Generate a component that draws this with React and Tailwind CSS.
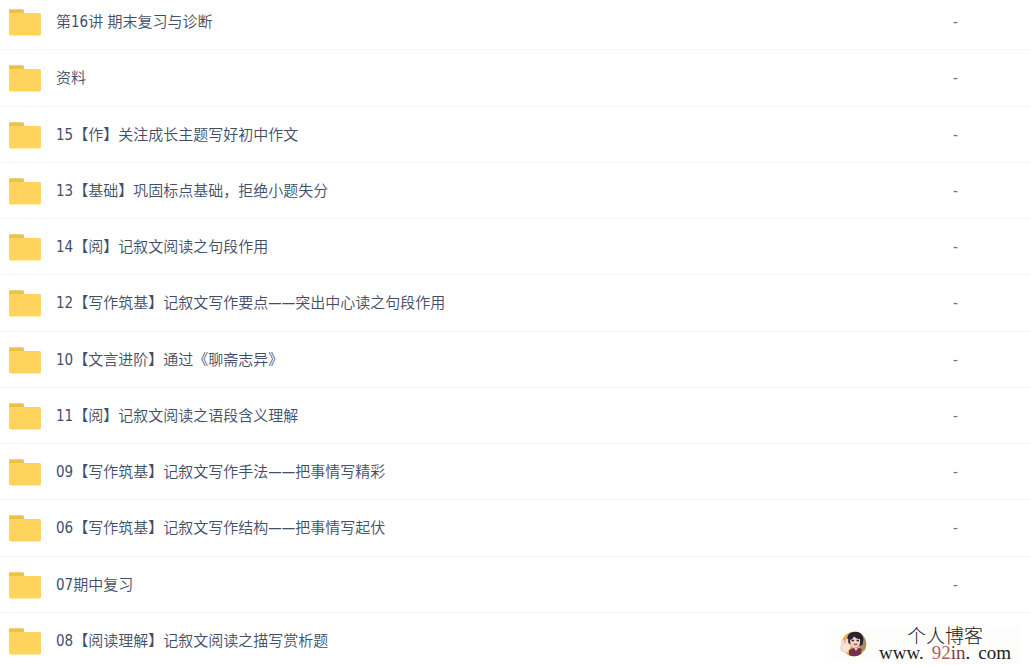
const rows = [
  { name: '第16讲 期末复习与诊断', size: '-' },
  { name: '资料', size: '-' },
  { name: '15【作】关注成长主题写好初中作文', size: '-' },
  { name: '13【基础】巩固标点基础，拒绝小题失分', size: '-' },
  { name: '14【阅】记叙文阅读之句段作用', size: '-' },
  { name: '12【写作筑基】记叙文写作要点——突出中心读之句段作用', size: '-' },
  { name: '10【文言进阶】通过《聊斋志异》', size: '-' },
  { name: '11【阅】记叙文阅读之语段含义理解', size: '-' },
  { name: '09【写作筑基】记叙文写作手法——把事情写精彩', size: '-' },
  { name: '06【写作筑基】记叙文写作结构——把事情写起伏', size: '-' },
  { name: '07期中复习', size: '-' },
  { name: '08【阅读理解】记叙文阅读之描写赏析题', size: '' },
];

function FolderIcon() {
  return (
    <svg className="block h-7 w-8 shrink-0" viewBox="0 0 32 28" aria-hidden="true">
      <path d="M0 2.6Q0 1.2 1.4 1.2H13.2Q14.6 1.2 14.9 2.6L15.5 6H0Z" fill="#ebc14c" />
      <path d="M0 5H30.6Q32 5 32 6.4V25.8Q32 27.6 30.2 27.6H1.8Q0 27.6 0 25.8Z" fill="#ffd45c" />
    </svg>
  );
}

function Avatar() {
  return (
    <svg className="h-7 w-7 shrink-0" viewBox="0 0 28 28" aria-hidden="true">
      <circle cx="15" cy="14" r="12.3" fill="#e3b04c" />
      <path d="M17 1.9A12.3 12.3 0 0 1 25 21L21 19 20 8Z" fill="#a9905f" />
      <path d="M8.5 12Q7 3 14 2Q23 0 24.5 9L23.5 15 20 16 11 14Z" fill="#2b2430" />
      <path d="M11 10Q14 9 15 6.5Q18 9.5 21 9Q22 17 16.5 18Q11 17 11 10Z" fill="#f3d3c4" />
      <path d="M12.6 10.5h2.4M17.6 10.5h2.4" stroke="#2b2430" strokeWidth="1.6" />
      <path d="M14.2 13.8h4.6q-2 3-4.6 0Z" fill="#a8404c" />
      <path d="M10 20Q16 16 23 19L22 24Q16 28 10 25Z" fill="#74304f" />
      <path d="M15 18l2 3 2-3Z" fill="#f3c9b0" />
      <path d="M3 10l2 0 1 4 1-5 2 0 0 5 2 0Q13 17 10 20L8 23 3 21Q0 17 3 15Z" fill="#f8e4d8" stroke="#d9b6a6" strokeWidth=".6" />
    </svg>
  );
}

function Watermark() {
  return (
    <div className="absolute right-3 bottom-1 flex h-9 items-center gap-3 bg-[#fdfdfb] pl-2 pr-2">
      <Avatar />
      <div className="flex flex-col items-center text-[19px] leading-[18px] text-[#222222]">
        <div className="font-['Noto_Sans_CJK_SC',sans-serif] font-light">个人博客</div>
        <div className="flex gap-2 font-['Liberation_Serif',serif] font-normal">
          <span>www.</span>
          <span className="text-[#b0625c]">
            92<span className="text-[#7c3a3c]">in</span>
            <span className="text-[#222222]">.</span>
          </span>
          <span>com</span>
        </div>
      </div>
    </div>
  );
}

export default function App() {
  return (
    <main className="relative h-screen overflow-hidden bg-white font-['DejaVu_Sans_Condensed','Noto_Sans_CJK_SC',sans-serif] text-[15px] font-[350] text-[#424e67]">
      <table className="-mt-1.5 w-full table-fixed border-separate border-spacing-0">
        <tbody>
          {rows.map(({ name, size }) => (
            <tr key={name} className="h-14 nth-[4n+2]:h-[57px]">
              <td className="border-b border-[#f1f5fc] p-0 pl-[9px]">
                <a href="#" className="flex items-center gap-[15px] leading-5">
                  <FolderIcon />
                  <span className="truncate">{name}</span>
                </a>
              </td>
              <td className="w-[78px] border-b border-[#f1f5fc] p-0 leading-5 text-[#6b7280]">{size}</td>
            </tr>
          ))}
        </tbody>
      </table>
      <Watermark />
    </main>
  );
}
